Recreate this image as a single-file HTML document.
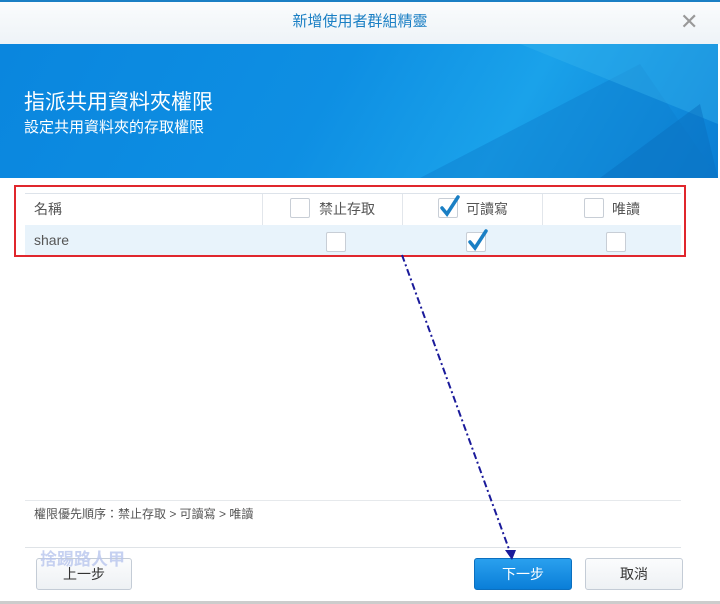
<!DOCTYPE html>
<html><head><meta charset="utf-8"><style>
body{margin:0;width:720px;height:604px;overflow:hidden;background:#fff;font-family:"Liberation Sans","Noto Sans CJK TC",sans-serif;position:relative}
.t{position:absolute;line-height:1.2}
.cb{position:absolute;width:20px;height:20px;border:1px solid #c8ced6;background:#fff;border-radius:2px;box-sizing:border-box}
.btn{position:absolute;top:558px;height:32px;border:1px solid #c4ccd6;border-radius:3px;background:linear-gradient(#fbfcfd,#eef1f4);font-size:14px;color:#333;text-align:center;line-height:30px;box-sizing:border-box}
</style></head><body>
<div class="t" style="left:0;top:0;width:720px;height:2px;background:#1a7fc4"></div>
<div class="t" style="left:0;top:2px;width:720px;height:42px;background:linear-gradient(#fafcfd,#eef3f7)"></div>
<div class="t" style="left:0;top:13px;width:720px;text-align:center;font-size:15px;color:#1a7fc4">新增使用者群組精靈</div>
<div class="t" style="left:680px;top:9px;font-size:22px;color:#999">✕</div>
<div class="t" style="left:0;top:44px;width:718px;height:134px;background:linear-gradient(120deg,#0a86de 0%,#0e8fe3 45%,#1aa2ea 70%,#0a7dd3 100%);overflow:hidden">
<svg width="718" height="134" style="position:absolute;left:0;top:0"><polygon points="420,134 640,20 718,134" fill="#0d7fd0" opacity=".5"/><polygon points="520,0 718,0 718,80" fill="#37b3ee" opacity=".4"/><polygon points="600,134 700,60 718,134" fill="#0a6fc0" opacity=".5"/></svg>
</div>
<div class="t" style="left:24px;top:90px;font-size:21px;color:#fff">指派共用資料夾權限</div>
<div class="t" style="left:24px;top:119px;font-size:15px;color:#fff">設定共用資料夾的存取權限</div>
<div class="t" style="left:25px;top:193px;width:656px;height:1px;background:#dde3ea"></div>
<div class="t" style="left:25px;top:225px;width:656px;height:31px;background:#e8f3fb"></div>
<div class="t" style="left:262px;top:194px;width:1px;height:31px;background:#e2e6eb"></div>
<div class="t" style="left:402px;top:194px;width:1px;height:31px;background:#e2e6eb"></div>
<div class="t" style="left:542px;top:194px;width:1px;height:31px;background:#e2e6eb"></div>
<div class="t" style="left:34px;top:201px;font-size:14px;color:#555">名稱</div>
<div class="t" style="left:34px;top:232px;font-size:14px;color:#555">share</div>
<div class="cb" style="left:290px;top:198px"></div><div class="t" style="left:319px;top:201px;font-size:14px;color:#555">禁止存取</div>
<div class="cb" style="left:438px;top:198px"></div><div class="t" style="left:466px;top:201px;font-size:14px;color:#555">可讀寫</div>
<div class="cb" style="left:584px;top:198px"></div><div class="t" style="left:612px;top:201px;font-size:14px;color:#555">唯讀</div>
<div class="cb" style="left:326px;top:232px"></div>
<div class="cb" style="left:466px;top:232px"></div>
<div class="cb" style="left:606px;top:232px"></div>
<svg class="t" style="left:0;top:0" width="720" height="604">
<path d="M442 208 L447 214 L458 197" fill="none" stroke="#1a7fc4" stroke-width="3.5" stroke-linecap="round"/>
<path d="M470 242 L475 248 L486 231" fill="none" stroke="#1a7fc4" stroke-width="3.5" stroke-linecap="round"/>
</svg>
<div class="t" style="left:14px;top:185px;width:672px;height:72px;border:2px solid #e0262c;box-sizing:border-box"></div>
<div class="t" style="left:25px;top:500px;width:656px;height:1px;background:#e6e9ec"></div>
<div class="t" style="left:34px;top:507px;font-size:12px;color:#555">權限優先順序：禁止存取 &gt; 可讀寫 &gt; 唯讀</div>
<div class="t" style="left:25px;top:547px;width:656px;height:1px;background:#dfe3e7"></div>
<div class="btn" style="left:36px;width:96px">上一步</div>
<div class="t" style="left:40px;top:550px;font-size:17px;color:#b9c6ee;font-weight:bold;opacity:.8">捨踢路人甲</div>
<div class="btn" style="left:474px;width:98px;background:linear-gradient(#2aa0ee,#0a7ed8);border-color:#0b6fbf;color:#fff">下一步</div>
<div class="btn" style="left:585px;width:98px">取消</div>
<svg class="t" style="left:0;top:0" width="720" height="604"><line x1="402" y1="255" x2="510" y2="552" stroke="#1a1a9a" stroke-width="2" stroke-dasharray="7,3,2,3"/><polygon points="505,550 516,550 512,560" fill="#1a1a9a"/></svg>
<div class="t" style="left:0;top:601px;width:720px;height:3px;background:#ccc"></div>
</body></html>
